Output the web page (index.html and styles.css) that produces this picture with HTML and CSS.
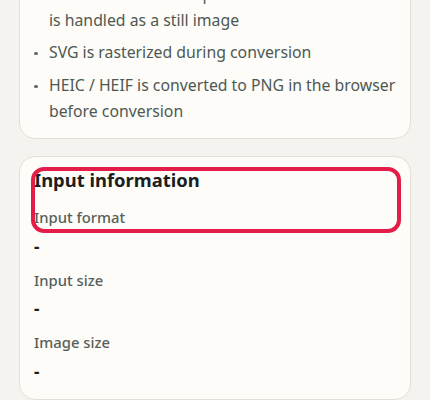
FILE: index.html
```html
<!DOCTYPE html>
<html lang="en">
<head>
<meta charset="utf-8">
<link rel="stylesheet" href="styles.css">
</head>
<body>
<main class="page">
  <section class="card notes">
    <ul class="note-list">
      <li><span>GIF animation is not preserved. The first frame is handled as a still image</span></li>
      <li><span>SVG is rasterized during conversion</span></li>
      <li><span>HEIC / HEIF is converted to PNG in the browser before conversion</span></li>
    </ul>
  </section>
  <section class="card info">
    <div class="highlight"></div>
    <h2 class="info-title">Input information</h2>
    <dl class="info-list">
      <div class="info-row"><dt>Input format</dt><dd>-</dd></div>
      <div class="info-row"><dt>Input size</dt><dd>-</dd></div>
      <div class="info-row"><dt>Image size</dt><dd>-</dd></div>
    </dl>
  </section>
</main>
</body>
</html>
```

FILE: styles.css
```css
* { box-sizing: border-box; }
html, body { margin: 0; padding: 0; }
body {
  background: #f4f3ef;
  font-family: "Noto Sans", "Noto Sans CJK JP", sans-serif;
  overflow: hidden;
}
.page {
  display: flex;
  flex-direction: column;
  gap: 17px;
  padding: 0 19px;
  margin-top: -33px;
}
.card {
  position: relative;
  background: #fdfcf8;
  border: 1px solid #e2dfd7;
  border-radius: 16px;
  padding: 14px;
}
.note-list {
  margin: 0;
  padding: 0;
  list-style: none;
  display: flex;
  flex-direction: column;
  gap: 7.3px;
  color: #4e5853;
  font-size: 15.8px;
  line-height: 25.5px;
}
.note-list li {
  display: grid;
  grid-template-columns: 15px 1fr;
}
.note-list li::before {
  content: "";
  width: 3.6px;
  height: 3.6px;
  margin-top: 11.5px;
  border-radius: 50%;
  background: #626b66;
}
.info {
  padding: 12px 14px 16px;
}
.info-title {
  margin: 0;
  font-size: 18.4px;
  line-height: 22px;
  font-weight: 700;
  color: #1b201d;
}
.info-list {
  margin: 16px 0 0;
  display: flex;
  flex-direction: column;
  gap: 12px;
}
.info-row {
  display: flex;
  flex-direction: column;
  gap: 8.5px;
}
.info-row dt {
  font-size: 14.8px;
  line-height: 20px;
  font-weight: 500;
  color: #56605a;
}
.info-row dd {
  margin: 0;
  font-size: 17px;
  line-height: 22px;
  font-weight: 700;
  color: #1b201d;
}
.highlight {
  position: absolute;
  left: 10.5px;
  top: 10px;
  width: 370px;
  height: 65.5px;
  border: 4.5px solid #e31d48;
  border-radius: 13px;
  z-index: 2;
  pointer-events: none;
}
```
